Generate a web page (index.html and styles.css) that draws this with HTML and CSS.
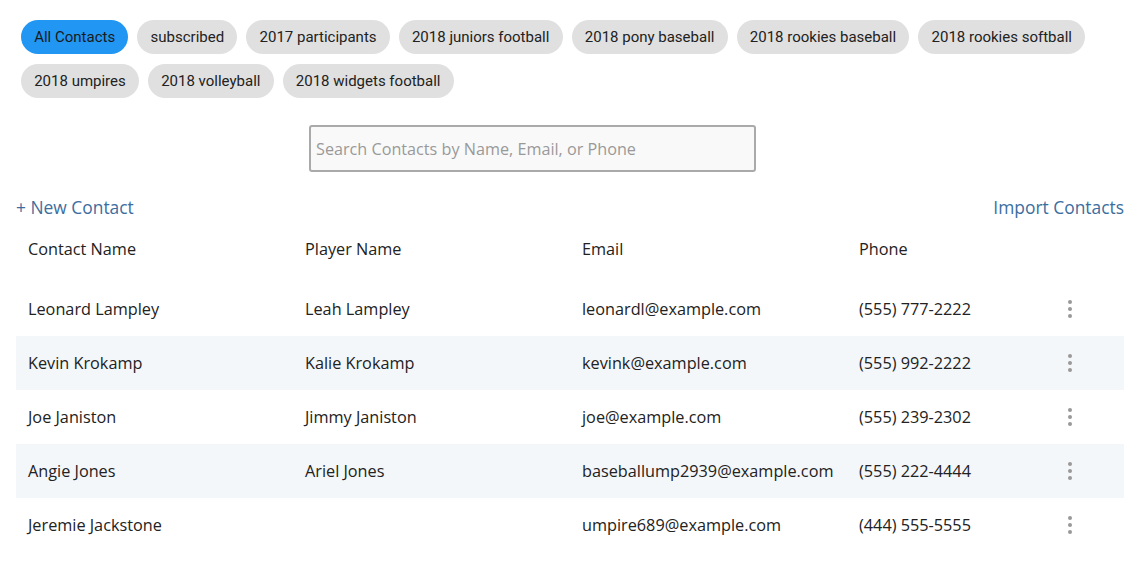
FILE: index.html
```html
<!DOCTYPE html>
<html>
<head>
<meta charset="utf-8">
<link rel="stylesheet" href="styles.css">
</head>
<body>
<div class="page">
  <div class="chips">
    <span class="chip active">All Contacts</span>
    <span class="chip">subscribed</span>
    <span class="chip">2017 participants</span>
    <span class="chip">2018 juniors football</span>
    <span class="chip">2018 pony baseball</span>
    <span class="chip">2018 rookies baseball</span>
    <span class="chip">2018 rookies softball</span>
    <span class="chip">2018 umpires</span>
    <span class="chip">2018 volleyball</span>
    <span class="chip">2018 widgets football</span>
  </div>
  <div class="search-wrap">
    <input class="search" type="text" placeholder="Search Contacts by Name, Email, or Phone">
  </div>
  <div class="actions">
    <a class="link">+ New Contact</a>
    <a class="link">Import Contacts</a>
  </div>
  <div class="table">
    <div class="row head">
      <div class="cell">Contact Name</div>
      <div class="cell">Player Name</div>
      <div class="cell">Email</div>
      <div class="cell">Phone</div>
      <div class="cell"></div>
    </div>
    <div class="row">
      <div class="cell">Leonard Lampley</div>
      <div class="cell">Leah Lampley</div>
      <div class="cell">leonardl@example.com</div>
      <div class="cell">(555) 777-2222</div>
      <div class="cell menu"><span class="kebab"><i></i><i></i><i></i></span></div>
    </div>
    <div class="row alt">
      <div class="cell">Kevin Krokamp</div>
      <div class="cell">Kalie Krokamp</div>
      <div class="cell">kevink@example.com</div>
      <div class="cell">(555) 992-2222</div>
      <div class="cell menu"><span class="kebab"><i></i><i></i><i></i></span></div>
    </div>
    <div class="row">
      <div class="cell">Joe Janiston</div>
      <div class="cell">Jimmy Janiston</div>
      <div class="cell">joe@example.com</div>
      <div class="cell">(555) 239-2302</div>
      <div class="cell menu"><span class="kebab"><i></i><i></i><i></i></span></div>
    </div>
    <div class="row alt">
      <div class="cell">Angie Jones</div>
      <div class="cell">Ariel Jones</div>
      <div class="cell">baseballump2939@example.com</div>
      <div class="cell">(555) 222-4444</div>
      <div class="cell menu"><span class="kebab"><i></i><i></i><i></i></span></div>
    </div>
    <div class="row">
      <div class="cell">Jeremie Jackstone</div>
      <div class="cell"></div>
      <div class="cell">umpire689@example.com</div>
      <div class="cell">(444) 555-5555</div>
      <div class="cell menu"><span class="kebab"><i></i><i></i><i></i></span></div>
    </div>
  </div>
</div>
</body>
</html>
```
FILE: styles.css
```css
html, body {
  margin: 0;
  padding: 0;
  background: #fff;
}
.page {
  padding: 20px 16px 0 16px;
  font-family: "Open Sans", "Liberation Sans", sans-serif;
  color: #222;
}
.chips {
  display: flex;
  flex-wrap: wrap;
  gap: 10px 9px;
  padding-left: 5px;
}
.chip {
  font-family: Roboto, "Liberation Sans", sans-serif;
  font-size: 15px;
  height: 33px;
  line-height: 33px;
  padding: 1px 13.2px 0 13.2px;
  border-radius: 18px;
  background: #e0e0e0;
  color: #222;
  white-space: nowrap;
}
.chip.active {
  background: #2196f3;
  color: #1a1a1a;
}
.search-wrap {
  display: flex;
  justify-content: flex-start;
  margin-top: 27px;
  padding-left: 293px;
}
.search {
  width: 447px;
  height: 47px;
  box-sizing: border-box;
  border: 2px solid #aaa;
  border-radius: 3px;
  background: #f9f9f9;
  padding: 0 5px;
  font-family: "Open Sans", "Liberation Sans", sans-serif;
  font-size: 16.2px;
  color: #333;
}
.search::placeholder {
  color: #999;
}
.actions {
  display: flex;
  justify-content: space-between;
  margin-top: 22px;
  height: 26px;
  align-items: center;
}
.link {
  color: #3b6e9e;
  font-size: 17.4px;
}
.table {
  margin-top: 4px;
}
.row {
  display: grid;
  grid-template-columns: 277px 277px 277px 169px 108px;
  height: 54px;
  align-items: center;
  font-size: 16.25px;
}
.row.head {
  height: 58px;
  align-items: start;
  padding-top: 14px;
  box-sizing: border-box;
}
.row.alt {
  background: #f4f7fa;
}
.cell {
  padding-left: 12px;
  white-space: nowrap;
}
.cell.menu {
  padding-left: 0;
  display: flex;
  justify-content: center;
}
.kebab {
  display: flex;
  flex-direction: column;
  gap: 3px;
}
.kebab i {
  display: block;
  width: 4px;
  height: 4px;
  border-radius: 50%;
  background: #999;
}
```
